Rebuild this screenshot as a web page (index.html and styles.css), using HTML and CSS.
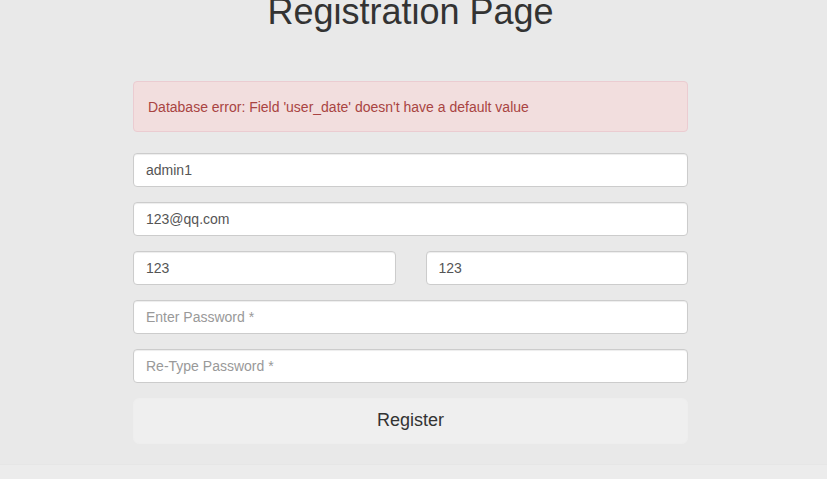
FILE: index.html
```html
<!DOCTYPE html>
<html>
<head>
<meta charset="utf-8">
<title>Registration Page</title>
<link rel="stylesheet" href="styles.css">
</head>
<body>
<div class="page">
  <h1 class="title">Registration Page</h1>
  <form class="form">
    <div class="alert">Database error: Field 'user_date' doesn't have a default value</div>
    <input class="field" type="text" value="admin1">
    <input class="field" type="text" value="123@qq.com">
    <div class="row">
      <input class="field" type="text" value="123">
      <input class="field" type="text" value="123">
    </div>
    <input class="field" type="password" placeholder="Enter Password *">
    <input class="field" type="password" placeholder="Re-Type Password *">
    <button class="btn" type="button">Register</button>
  </form>
</div>
<div class="footer"></div>
</body>
</html>
```
FILE: styles.css
```css
html, body {
  margin: 0;
  padding: 0;
  background: #e9e9e9;
  font-family: "Liberation Sans", Arial, sans-serif;
  color: #333;
  overflow: hidden;
}
.page {
  width: 555px;
  margin: 0 auto;
  padding-right: 6px;
}
.title {
  margin: -8px 0 0;
  font-size: 36px;
  font-weight: normal;
  line-height: 39.6px;
  text-align: center;
  color: #333;
}
.form {
  display: flex;
  flex-direction: column;
  gap: 15px;
  padding-top: 49px;
  padding-bottom: 20px;
}
.alert {
  background: #f2dede;
  border: 1px solid #ebccd1;
  border-radius: 4px;
  color: #a94442;
  font-size: 14px;
  line-height: 20px;
  padding: 15px 14px 14px;
  margin-bottom: 6px;
}
.field {
  display: block;
  box-sizing: border-box;
  width: 100%;
  height: 34px;
  padding: 6px 12px;
  font-family: "Liberation Sans", Arial, sans-serif;
  font-size: 14px;
  color: #555;
  background: #fff;
  border: 1px solid #ccc;
  border-radius: 4px;
  box-shadow: inset 0 1px 1px rgba(0,0,0,0.075);
  outline: none;
}
.field::placeholder {
  color: #999;
}
.row {
  display: flex;
  gap: 30px;
}
.row .field {
  flex: 1;
  min-width: 0;
}
.btn {
  height: 46px;
  font-family: "Liberation Sans", Arial, sans-serif;
  font-size: 18px;
  color: #333;
  background: #efefef;
  border: 1px solid #eeeeee;
  border-radius: 6px;
  padding: 10px 16px;
}
.footer {
  height: 14px;
  background: #ececec;
  border-top: 1px solid #e6e6e6;
}
```
